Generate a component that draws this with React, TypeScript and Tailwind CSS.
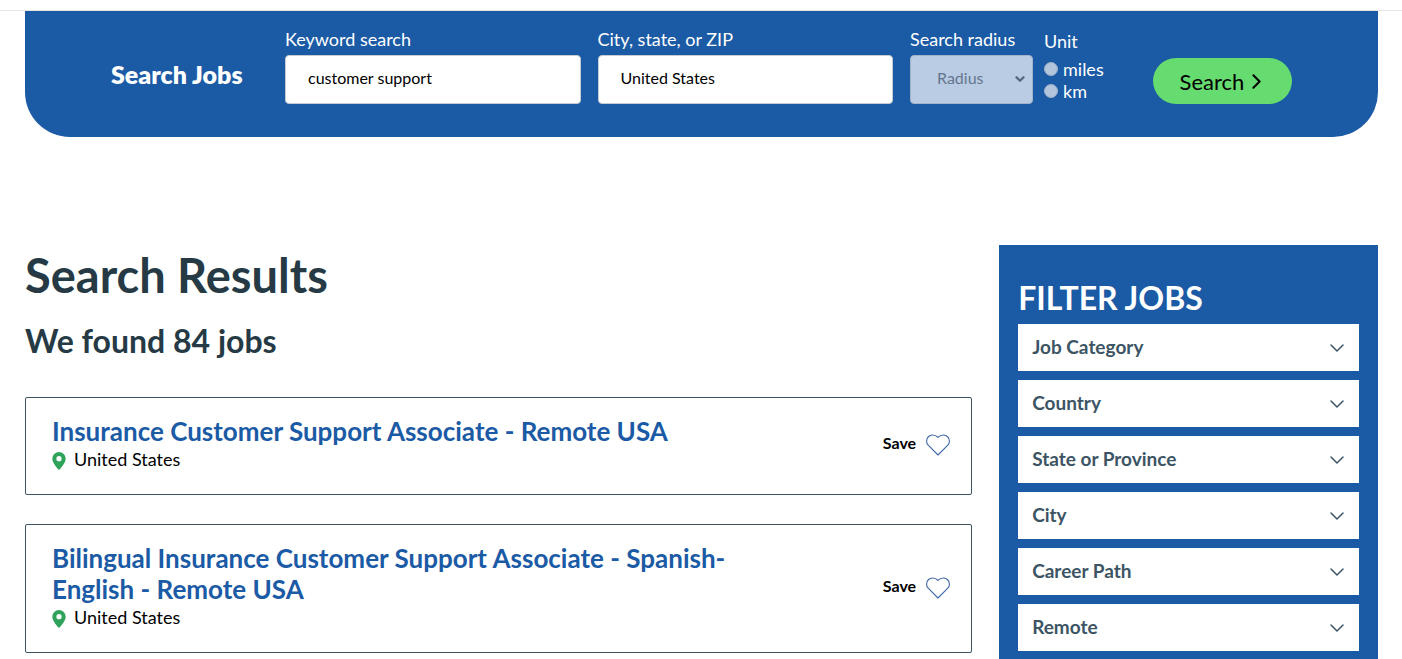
import { useState } from "react";
import { ChevronDown, ChevronRight } from "lucide-react";

interface Job {
  id: number;
  title: string;
  location: string;
}

const jobs: Job[] = [
  {
    id: 1,
    title: "Insurance Customer Support Associate - Remote USA",
    location: "United States",
  },
  {
    id: 2,
    title: "Bilingual Insurance Customer Support Associate - Spanish-English - Remote USA",
    location: "United States",
  },
];

const filters = [
  "Job Category",
  "Country",
  "State or Province",
  "City",
  "Career Path",
  "Remote",
];

function PinIcon() {
  return (
    <svg width="14" height="18" viewBox="0 0 14 18" className="mt-0.5 shrink-0" aria-hidden="true">
      <path
        fill="#2fa35a"
        fillRule="evenodd"
        d="M7 0a6.7 6.7 0 0 0-6.7 6.7C.3 10 3.500 14.500 7 18c3.500-3.500 6.700-8 6.700-11.300A6.700 6.700 0 0 0 7 0Zm0 4.100a2.600 2.600 0 1 1 0 5.200 2.600 2.600 0 0 1 0-5.200Z"
      />
    </svg>
  );
}

function HeartIcon({ filled }: { filled: boolean }) {
  return (
    <svg width="24" height="22" viewBox="0 0 24 22" className="shrink-0" aria-hidden="true">
      <path
        d="M12 21 2.200 11.200A6 6 0 0 1 .6 7 6 6 0 0 1 6.600 1C9 1 10.500 1.700 12 3.400 13.500 1.700 15 1 17.400 1a6 6 0 0 1 6 6 6 6 0 0 1-1.600 4.200Z"
        fill={filled ? "#1b5aa5" : "none"}
        stroke="#3f68a8"
        strokeWidth="1.100"
        strokeLinejoin="round"
      />
    </svg>
  );
}

function SearchBar() {
  const [keyword, setKeyword] = useState("customer support");
  const [location, setLocation] = useState("United States");

  return (
    <form
      onSubmit={(e) => e.preventDefault()}
      className="flex items-start rounded-b-[45px] bg-[#1b5aa5] px-[86px] pt-4 pb-[33px] text-white"
    >
      <h2 className="mt-8 w-[174px] shrink-0 text-[25px] leading-[30px] font-extrabold">Search Jobs</h2>
      <div className="flex min-w-0 flex-1 gap-[17px]">
        <div className="min-w-0 flex-1">
          <label htmlFor="keyword" className="block pb-1 text-lg leading-6">
            Keyword search
          </label>
          <input
            id="keyword"
            type="text"
            value={keyword}
            onChange={(e) => setKeyword(e.target.value)}
            className="h-[49px] w-full rounded border border-[#c5cbd3] bg-white px-[22px] pb-1 text-base text-black"
          />
        </div>
        <div className="min-w-0 flex-1">
          <label htmlFor="location" className="block pb-1 text-lg leading-6">
            City, state, or ZIP
          </label>
          <input
            id="location"
            type="text"
            value={location}
            onChange={(e) => setLocation(e.target.value)}
            className="h-[49px] w-full rounded border border-[#c5cbd3] bg-white px-[22px] pb-1 text-base text-black"
          />
        </div>
        <div className="w-[123px] shrink-0">
          <label htmlFor="radius" className="block pb-1 text-lg leading-6">
            Search radius
          </label>
          <div className="relative">
            <select
              id="radius"
              disabled
              className="h-[49px] w-full appearance-none rounded border border-[#a3b3c9] bg-[#bacce3] px-[26px] pb-1 text-base text-[#64768f]"
            >
              <option>Radius</option>
            </select>
            <ChevronDown
              className="pointer-events-none absolute top-[17px] right-1.5 text-[#56677f]"
              size={14}
              strokeWidth={4}
            />
          </div>
        </div>
      </div>
      <fieldset className="ml-[11px] w-[109px] shrink-0 pt-[3px] text-lg leading-[22px]" disabled>
        <legend className="float-left mb-1.5 w-full">Unit</legend>
        <label className="clear-both flex items-center gap-[5px]">
          <input
            type="radio"
            name="unit"
            value="miles"
            className="size-3.5 appearance-none rounded-full border border-[#9fb0c6] bg-[#b3c5dc]"
          />
          miles
        </label>
        <label className="flex items-center gap-[5px]">
          <input
            type="radio"
            name="unit"
            value="km"
            className="size-3.5 appearance-none rounded-full border border-[#9fb0c6] bg-[#b3c5dc]"
          />
          km
        </label>
      </fieldset>
      <button
        type="submit"
        className="mt-[31px] flex h-[46px] w-[139px] shrink-0 items-center justify-center rounded-full bg-[#65db70] pl-1 text-[22px] text-black"
      >
        Search
        <ChevronRight size={25} strokeWidth={2} />
      </button>
    </form>
  );
}

function JobCard({ job }: { job: Job }) {
  const [saved, setSaved] = useState(false);

  return (
    <li className="flex items-center justify-between rounded-xs border border-[#3c5464] pt-[18px] pr-[21px] pb-5 pl-[26px]">
      <div className="max-w-[720px]">
        <h3 className="text-[26px] leading-[31px] font-bold text-[#1b5aa5]">
          <a href="#">{job.title}</a>
        </h3>
        <p className="flex items-center gap-2 pb-0.5 text-lg leading-[25px] text-black">
          <PinIcon />
          {job.location}
        </p>
      </div>
      <button
        type="button"
        aria-pressed={saved}
        onClick={() => setSaved(!saved)}
        className="flex shrink-0 items-center gap-2.5 text-base leading-5 font-bold text-black"
      >
        <span className="pb-1">Save</span>
        <HeartIcon filled={saved} />
      </button>
    </li>
  );
}

function FilterPanel() {
  return (
    <aside className="bg-[#1b5aa5] px-[19px] pt-[33px] pb-2">
      <h2 className="text-[32px] leading-10 font-bold text-white">FILTER JOBS</h2>
      <div className="mt-1.5 flex flex-col gap-[9px]">
        {filters.map((name) => (
          <button
            key={name}
            type="button"
            className="flex h-[47px] items-center justify-between bg-white pr-2.5 pl-3.5 text-left text-[19px] leading-6 font-bold text-[#3c5464]"
          >
            <span className="pb-0.5">{name}</span>
            <ChevronDown size={24} strokeWidth={1.5} />
          </button>
        ))}
      </div>
    </aside>
  );
}

export default function App() {
  return (
    <div className="bg-white pt-2.5 font-[Lato,sans-serif]">
      <header className="border-t border-[#e5e5e5] pr-6 pl-[25px]">
        <SearchBar />
      </header>
      <main className="mt-[108px] grid grid-cols-[5fr_2fr] gap-[27px] pr-6 pl-[25px]">
        <section>
          <h1 className="text-[47px] leading-[60px] font-bold text-[#263a45]">Search Results</h1>
          <p className="mt-4 text-[32px] leading-10 font-bold text-[#263a45]">We found 84 jobs</p>
          <ul className="mt-9 flex flex-col gap-[29px]">
            {jobs.map((job) => (
              <JobCard key={job.id} job={job} />
            ))}
          </ul>
        </section>
        <FilterPanel />
      </main>
    </div>
  );
}
